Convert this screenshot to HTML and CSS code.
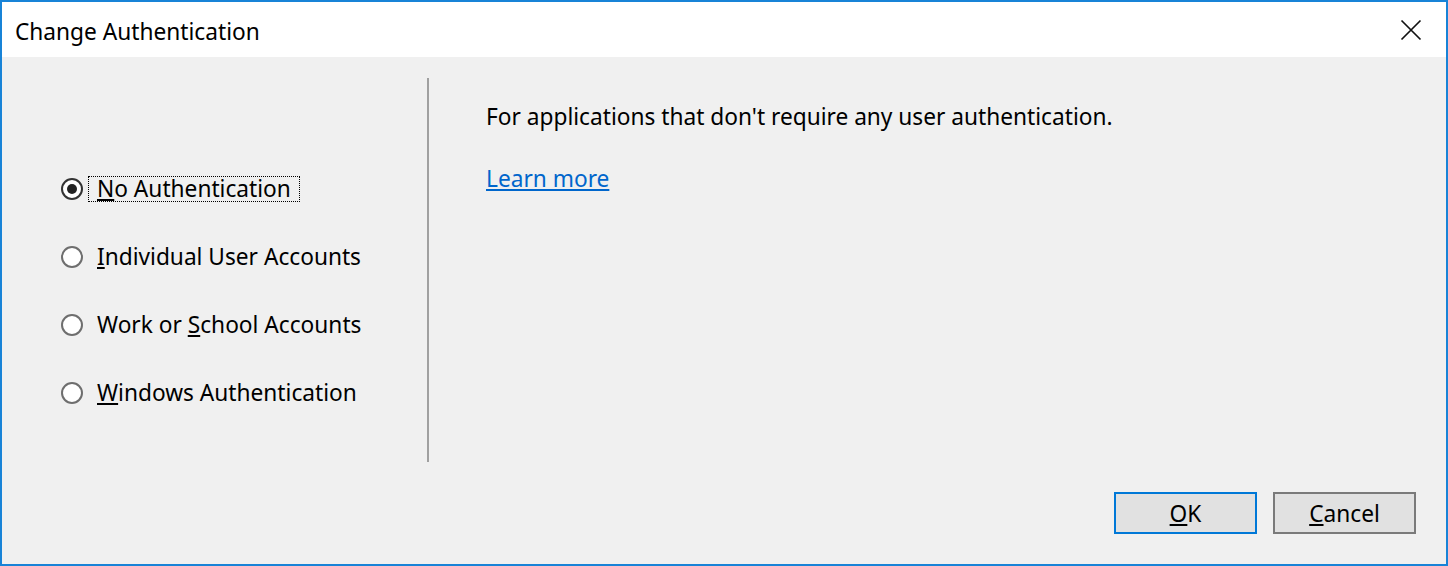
FILE: index.html
```html
<!DOCTYPE html>
<html>
<head>
<meta charset="utf-8">
<link rel="stylesheet" href="styles.css">
</head>
<body>
<div class="window">
  <div class="titlebar">
    <span class="title">Change Authentication</span>
    <span class="close">
      <svg width="22" height="22" viewBox="0 0 22 22"><path d="M1.5 1.5 L20.5 20.5 M20.5 1.5 L1.5 20.5" stroke="#111" stroke-width="1.7" fill="none"/></svg>
    </span>
  </div>
  <div class="body">
    <div class="main">
      <div class="options">
        <div class="option">
          <span class="radio checked"></span>
          <span class="label focus"><u>N</u>o Authentication</span>
        </div>
        <div class="option">
          <span class="radio"></span>
          <span class="label"><u>I</u>ndividual User Accounts</span>
        </div>
        <div class="option">
          <span class="radio"></span>
          <span class="label">Work or <u>S</u>chool Accounts</span>
        </div>
        <div class="option">
          <span class="radio"></span>
          <span class="label"><u>W</u>indows Authentication</span>
        </div>
      </div>
      <div class="divider"></div>
      <div class="info">
        <p class="desc">For applications that don't require any user authentication.</p>
        <a class="link" href="#">Learn more</a>
      </div>
    </div>
    <div class="footer">
      <button class="btn primary"><u>O</u>K</button>
      <button class="btn"><u>C</u>ancel</button>
    </div>
  </div>
</div>
</body>
</html>
```
FILE: styles.css
```css
html, body {
  margin: 0;
  padding: 0;
  height: 100%;
}
body {
  font-family: "Noto Sans", "Open Sans", sans-serif;
  color: #000;
  background: #f0f0f0;
}
.window {
  box-sizing: border-box;
  height: 566px;
  border: 2px solid #1883d7;
  display: flex;
  flex-direction: column;
}
.titlebar {
  box-sizing: border-box;
  height: 55px;
  background: #fff;
  display: flex;
  align-items: center;
  justify-content: space-between;
  padding: 2px 24px 0 13px;
}
.title {
  font-size: 22.7px;
  line-height: 26px;
  padding-top: 2px;
}
.close {
  display: flex;
  padding-bottom: 1px;
}
.body {
  flex: 1;
  background: #f0f0f0;
  display: flex;
  flex-direction: column;
  padding: 21px 30px 30px 0;
}
.main {
  flex: 1;
  display: flex;
}
.options {
  width: 366px;
  padding: 94px 0 0 59px;
  display: flex;
  flex-direction: column;
  gap: 34px;
}
.option {
  height: 34px;
  display: flex;
  align-items: center;
  gap: 5px;
}
.radio {
  box-sizing: border-box;
  width: 22px;
  height: 22px;
  border-radius: 50%;
  border: 2px solid #6e6e6e;
  background: #fff;
  position: relative;
  flex: none;
}
.radio.checked {
  border-color: #333;
}
.radio.checked::after {
  content: "";
  position: absolute;
  left: 4px;
  top: 4px;
  width: 10px;
  height: 10px;
  border-radius: 50%;
  background: #222;
}
.label {
  font-size: 22.7px;
  line-height: 24px;
  padding: 0 8px;
  border: 1px dotted transparent;
  white-space: nowrap;
}
.label.focus {
  border-color: #000;
}
.divider {
  width: 2px;
  background: #a0a0a0;
}
.info {
  padding: 24px 0 0 57px;
}
.desc {
  margin: 0;
  font-size: 22.7px;
  line-height: 30px;
}
.link {
  display: inline-block;
  margin-top: 32px;
  font-size: 22.7px;
  line-height: 30px;
  color: #0066cc;
  text-decoration: underline;
}
.footer {
  margin-top: 30px;
  display: flex;
  justify-content: flex-end;
  gap: 16px;
}
.btn {
  box-sizing: border-box;
  width: 143px;
  height: 42px;
  border: 2px solid #7a7a7a;
  background: #e1e1e1;
  font-family: "Noto Sans", "Open Sans", sans-serif;
  font-size: 22.7px;
  color: #000;
  padding: 0;
}
.btn.primary {
  border-color: #0078d7;
}
```
